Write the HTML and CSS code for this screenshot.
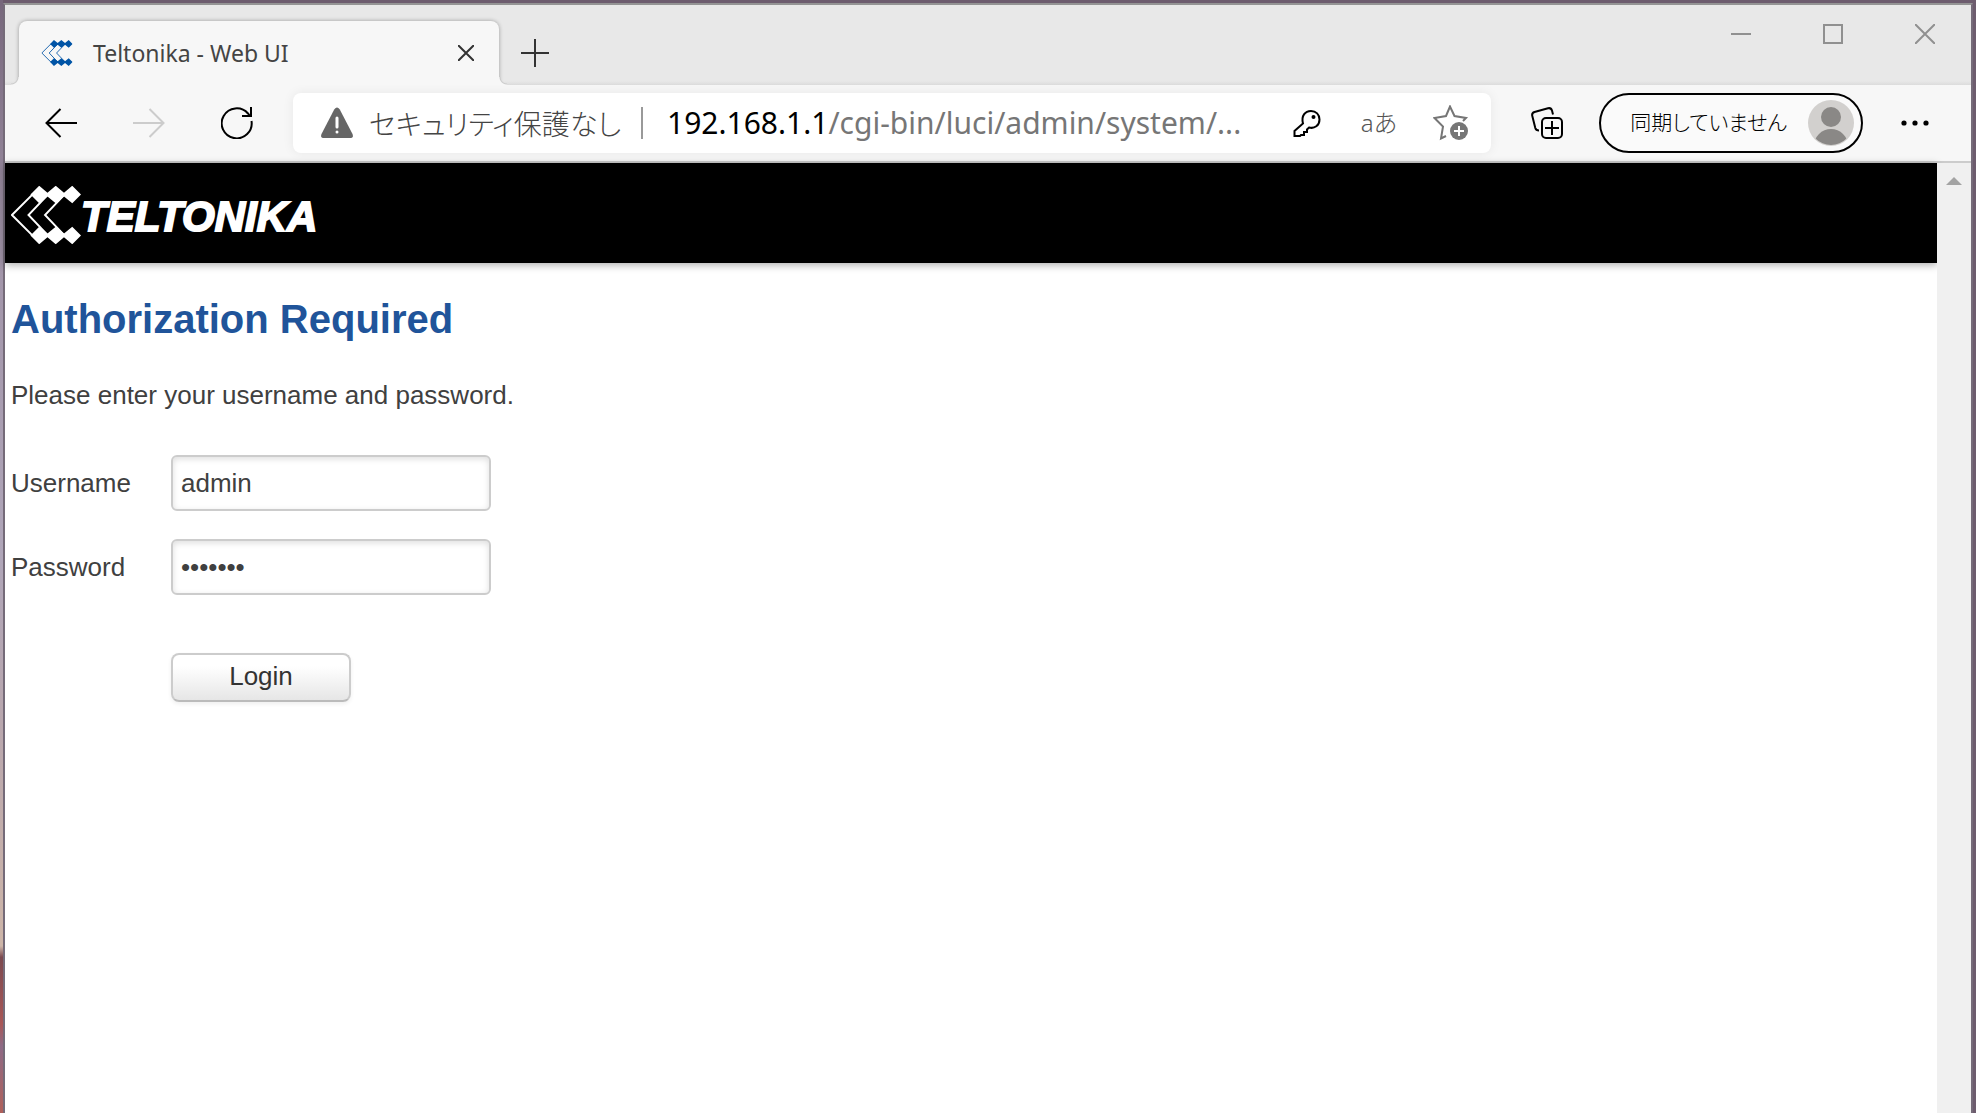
FILE: index.html
```html
<!DOCTYPE html>
<html lang="ja">
<head>
    <meta charset="utf-8">
    <meta name="viewport" content="width=device-width, initial-scale=1.0">
    <title>Teltonika - Web UI</title>
    <link rel="stylesheet" href="styles.css">
</head>

<body>
    <svg class="defs" aria-hidden="true">
        <symbol id="mark" viewBox="0 0 72 60">
            <path fill="none" stroke="currentColor" stroke-width="2" d="M23 8L1 30l22 22M38 9L18 30l20 21M55 9L35 30l20 21"/>
            <path fill="currentColor" d="M29 0l8.500 7L46 0l8.500 7L63 0l9 9-9 9-8.500-7L46 18l-8.500-7L29 18l-9-9zM29 60l8.500-7L46 60l8.500-7L63 60l9-9-9-9-8.500 7L46 42l-8.500 7L29 42l-9 9z"/>
        </symbol>
    </svg>

    <div class="window">
        <header class="titlebar">
            <div class="tab">
                <svg class="favicon" viewBox="0 0 72 60"><use href="#mark"/></svg>
                <span class="tab-title">Teltonika - Web UI</span>
                <button class="tab-close" aria-label="タブを閉じる">
                    <svg width="16" height="16" viewBox="0 0 16 16"><path d="M0 0l16 16M16 0L0 16"/></svg>
                </button>
            </div>
            <button class="tab-new" aria-label="新しいタブ">
                <svg width="28" height="28" viewBox="0 0 28 28"><path d="M14 0v28M0 14h28"/></svg>
            </button>
            <div class="controls">
                <button aria-label="最小化"><svg width="20" height="20" viewBox="0 0 20 20"><path d="M0 10h20"/></svg></button>
                <button aria-label="最大化"><svg width="20" height="20" viewBox="0 0 20 20"><path d="M1 1h18v18H1z"/></svg></button>
                <button aria-label="閉じる"><svg width="20" height="20" viewBox="0 0 20 20"><path d="M0 0l20 20M20 0L0 20"/></svg></button>
            </div>
        </header>

        <nav class="toolbar">
            <button class="tool" aria-label="戻る">
                <svg width="32" height="30" viewBox="0 0 32 30"><path d="M15.500 1L1.500 15l14 14M1.500 15H32"/></svg>
            </button>
            <button class="tool off" aria-label="進む" disabled>
                <svg width="32" height="30" viewBox="0 0 32 30"><path d="M16.500 1l14 14-14 14M30.500 15H0"/></svg>
            </button>
            <button class="tool" aria-label="更新">
                <svg width="32" height="32" viewBox="0 0 32 32"><path d="M30.500 14A15 15 0 1 1 27 6.500l2 2.500M30 0v9h-9"/></svg>
            </button>

            <div class="address">
                <svg class="warn" width="32" height="32" viewBox="0 0 32 32">
                    <path fill="#666" d="M13.200 2.600Q16-1.500 18.800 2.600L31.500 27Q33 31 29 31H3Q-1 31 .5 27z"/>
                    <path stroke="#fff" stroke-width="3" stroke-linecap="round" d="M16 11v9M16 25v.1"/>
                </svg>
                <span class="insecure">セキュリティ保護なし</span>
                <span class="divider"></span>
                <div class="url" role="textbox" aria-label="アドレス" tabindex="0"><b>192.168.1.1</b>/cgi-bin/luci/admin/system/...</div>
                <button class="inner key" aria-label="パスワード">
                    <svg width="28" height="28" viewBox="0 0 28 28"><path d="M10 14.500C8 7 12 2 18 2c5 0 8.500 3.500 8.500 8.500 0 6-5 9.500-10.500 8l-2 2v2.500h-3V26H8l-1 1H1.500v-5z"/><circle cx="20.500" cy="8" r="2" fill="#000" stroke="none"/></svg>
                </button>
                <button class="inner lang" aria-label="翻訳">aあ</button>
                <button class="inner star" aria-label="お気に入りに追加">
                    <svg width="36" height="36" viewBox="0 0 36 36"><path d="M13 31l-5 2.500 2-12L1.500 13l11.500-2 4-9.500L21.500 11 33 13l-3 3"/><circle cx="26" cy="26" r="9" fill="#767676" stroke="none"/><path stroke="#fff" d="M26 21v10M21 26h10"/></svg>
                </button>
            </div>

            <button class="tool" aria-label="コレクション">
                <svg width="32" height="32" viewBox="0 0 32 32"><path d="M22 7.500L21 3.500Q20 .5 17 1.300L3.500 5Q.5 6 1.300 9l3 12Q5 23.500 8 23.500"/><rect x="11" y="11" width="20" height="20" rx="4"/><path d="M21 14v14M14 21h14"/></svg>
            </button>
            <button class="profile">
                <span>同期していません</span>
                <svg width="46" height="46" viewBox="0 0 46 46">
                    <clipPath id="face"><circle cx="23" cy="23" r="22"/></clipPath>
                    <circle cx="23" cy="23" r="23" fill="#d2d0ce"/>
                    <g fill="#8a8886" clip-path="url(#face)"><circle cx="23" cy="17" r="10"/><circle cx="23" cy="46" r="17"/></g>
                </svg>
            </button>
            <button class="tool" aria-label="設定など">
                <svg width="28" height="6" viewBox="0 0 28 6"><g fill="#000" stroke="none"><circle cx="3" cy="3" r="2.600"/><circle cx="14" cy="3" r="2.600"/><circle cx="25" cy="3" r="2.600"/></g></svg>
            </button>
        </nav>

        <div class="view">
            <div class="page">
                <div class="banner">
                    <svg class="logo" viewBox="0 0 72 60"><use href="#mark"/></svg>
                    <span class="brand">TELTONIKA</span>
                </div>
                <main class="content">
                    <h1>Authorization Required</h1>
                    <p>Please enter your username and password.</p>
                    <form class="login" onsubmit="return false">
                        <label for="user">Username</label>
                        <input id="user" type="text" value="admin">
                        <label for="pass">Password</label>
                        <input id="pass" type="password" value="admin01">
                        <button type="submit">Login</button>
                    </form>
                </main>
            </div>
            <div class="scroll">
                <svg width="16" height="8" viewBox="0 0 16 8"><path fill="#a3a3a3" d="M8 0l8 8H0z"/></svg>
            </div>
        </div>
    </div>
</body>

</html>
```
FILE: styles.css
```css
* {
    box-sizing: border-box;
}
body {
    --ui: "Noto Sans", "Noto Sans CJK JP", sans-serif;
    margin: 0;
    padding: 3px 3px 0;
    min-height: 100vh;
    display: flex;
    font-family: "Liberation Sans", Arial, sans-serif;
    /* wallpaper behind the window */
    background:
        linear-gradient(#77677c, #a396aa 25%, #b0a6b9 50%, #b9a7ae 65%, #cdb5a8 85%, #7c4a50 86%, #a95757 92%, #8e6a86 94%, #b0605a) 0 0 / 3px 100% no-repeat,
        #6d5c6e;
}

button {
    display: flex;
    align-items: center;
    justify-content: center;
    margin: 0;
    padding: 0;
    border: none;
    background: none;
    font-family: var(--ui);
}
button svg {
    fill: none;
    stroke: #000;
    stroke-width: 2;
    flex: none;
}

.defs {
    position: absolute;
    width: 0;
    height: 0;
}

.window {
    flex: 1;
    min-width: 0;
    display: flex;
    flex-direction: column;
    border: 2px solid #756b79;
    border-top-color: #949494;
    border-bottom: none;
    background: #f7f7f7;
}

/* tabs */
.titlebar {
    display: flex;
    height: 80px;
    padding-left: 14px;
    background: linear-gradient(#e8e8e8 76px, #dcdcdc);
}
.tab {
    position: relative;
    display: flex;
    align-items: center;
    align-self: flex-end;
    width: 480px;
    height: 64px;
    padding: 0 17px 0 22px;
    background: #f7f7f7;
    border-radius: 8px 8px 0 0;
    box-shadow: 0 0 4px #0005;
    clip-path: inset(-6px -8px 0 -8px);
}
/* curved feet of the active tab */
.tab:before, .tab:after {
    content: "";
    position: absolute;
    bottom: 0;
    width: 8px;
    height: 8px;
}
.tab:before {
    right: 100%;
    background: radial-gradient(circle at 0 0, #0000 6px, #ccc 7px, #f7f7f7 8px);
}
.tab:after {
    left: 100%;
    background: radial-gradient(circle at 100% 0, #0000 6px, #ccc 7px, #f7f7f7 8px);
}
.favicon {
    width: 32px;
    height: 26px;
    color: #0054a6;
}
.tab-title {
    flex: 1;
    padding-left: 20px;
    font: 23px/32px var(--ui);
    color: #444;
}
.tab-close {
    width: 32px;
    height: 32px;
}
.tab-close svg, .tab-new svg {
    stroke: #333;
}
.tab-new {
    width: 72px;
    height: 68px;
    margin-top: 14px;
}
.controls {
    display: flex;
    margin-left: auto;
}
.controls button {
    width: 92px;
    height: 58px;
}
.controls svg {
    stroke: #909090;
}

/* toolbar */
.toolbar {
    display: flex;
    align-items: center;
    height: 78px;
    padding: 0 12px;
    border-bottom: 2px solid #ccc;
}
.tool {
    width: 88px;
    height: 60px;
}
.off svg {
    stroke: #ccc;
}
.address {
    flex: 1;
    min-width: 0;
    display: flex;
    align-items: center;
    height: 60px;
    margin: 0 12px;
    padding: 0 4px 0 28px;
    background: #fff;
    border-radius: 8px;
    box-shadow: 0 0 12px #0001;
}
.warn {
    flex: none;
}
.insecure {
    padding: 0 20px 0 16px;
    font: 300 28px/40px "Noto Sans CJK JP", sans-serif;
    font-feature-settings: "palt";
    color: #444;
    white-space: nowrap;
}
.divider {
    width: 2px;
    height: 32px;
    background: #999;
}
.url {
    flex: 1;
    min-width: 0;
    padding-left: 24px;
    font: 30px/42px var(--ui);
    color: #767676;
    white-space: nowrap;
    overflow: hidden;
}
.url b {
    font-weight: normal;
    color: #000;
}
.inner {
    flex: none;
    width: 72px;
    height: 52px;
}
.lang {
    padding-bottom: 4px;
    font-size: 24px;
    font-weight: 300;
    color: #555;
}
.star svg {
    stroke: #767676;
}
.profile {
    gap: 20px;
    height: 60px;
    margin: 0 8px;
    padding: 0 7px 0 28px;
    border: 2px solid #000;
    border-radius: 30px;
    background: #fafafa;
    font: 300 21px/32px "Noto Sans CJK JP", sans-serif;
    font-feature-settings: "palt";
    color: #000;
    white-space: nowrap;
}
.profile span {
    padding: 0 1px 4px;
}
.profile svg {
    stroke: none;
}

/* page */
.view {
    flex: 1;
    display: flex;
    background: #fff;
}
.page {
    flex: 1;
    min-width: 0;
}
.scroll {
    width: 34px;
    padding-top: 14px;
    background: #f0f0f0;
    text-align: center;
    line-height: 0;
}
.banner {
    display: flex;
    align-items: center;
    height: 100px;
    padding: 4px 6px 0;
    background: #000;
    color: #fff;
    box-shadow: 0 2px 8px #0005;
}
.logo {
    width: 70px;
    height: 60px;
    overflow: visible;
}
.brand {
    padding-top: 4px;
    font: italic bold 42px/48px "Liberation Sans", Arial, sans-serif;
    -webkit-text-stroke: 2px #fff;
}
.content {
    padding: 32px 6px;
    font-size: 26px;
    line-height: 36px;
    color: #404040;
}
h1 {
    margin: 0 0 34px;
    font-size: 40px;
    line-height: 48px;
    color: #20549a;
}
p {
    margin: 0 0 42px;
}
.login {
    display: grid;
    grid-template-columns: 160px 320px;
    align-items: center;
    row-gap: 28px;
}
.login input {
    width: 100%;
    height: 56px;
    margin: 0;
    padding: 0 8px;
    border: 2px solid #ccc;
    border-radius: 6px;
    box-shadow: inset 0 2px 6px #0002;
    background: #fff;
    font: inherit;
    color: #404040;
}
.login button {
    grid-column: 2;
    width: 180px;
    height: 49px;
    margin-top: 30px;
    padding-bottom: 4px;
    border: 2px solid #ccc;
    border-bottom-color: #bbb;
    border-radius: 8px;
    background: linear-gradient(#fff 25%, #e6e6e6);
    box-shadow: 0 2px 4px #0001;
    font: inherit;
    color: #333;
}
```
